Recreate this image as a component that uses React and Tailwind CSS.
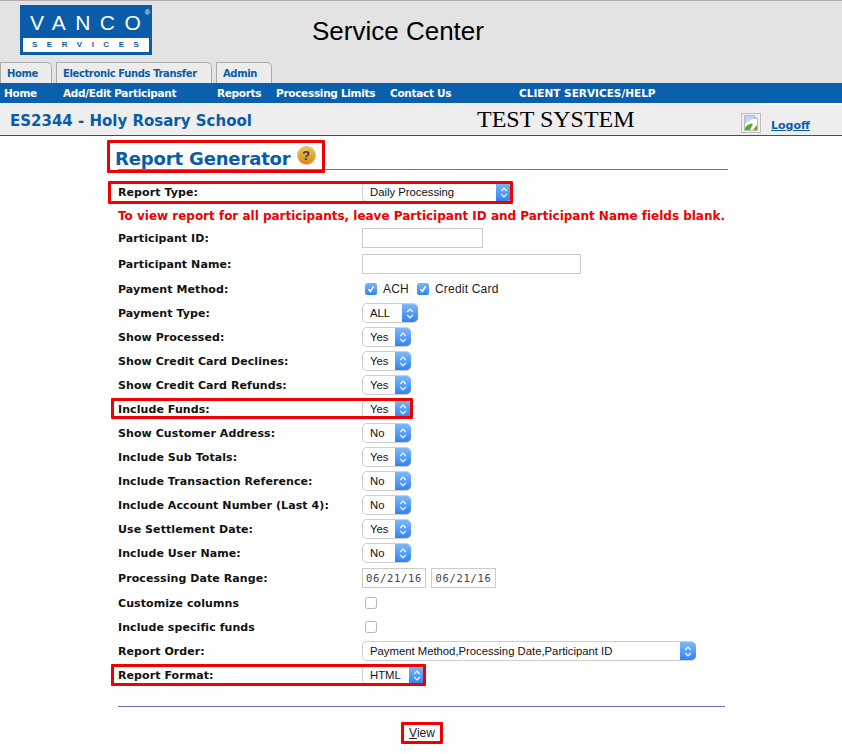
const sans = "font-['DejaVu_Sans',Verdana,sans-serif]";

function Sel({ w, text, seg = 16 }) {
  return (
    <div style={{ width: w }} className="h-5 flex bg-white border border-[#cfcfcf] border-r-0 rounded-[5px] font-['Liberation_Sans',Arial,sans-serif] text-[11.3px] text-[#111] leading-[18px] overflow-hidden">
      <div className="flex-1 pl-[7px] whitespace-nowrap">{text}</div>
      <div style={{ width: seg }} className="flex items-center justify-center bg-gradient-to-b from-[#7ab8fc] to-[#2f83f0]">
        <svg width="8" height="13" viewBox="0 0 8 13" fill="none" stroke="white" strokeWidth="1.2">
          <path d="M1.2 5 4 2.2 6.8 5" />
          <path d="M1.2 8 4 10.8 6.8 8" />
        </svg>
      </div>
    </div>
  );
}

function Check({ on }) {
  return on ? (
    <span className="w-3 h-3 rounded-[2.5px] bg-gradient-to-b from-[#7ab8fc] to-[#2f83f0] flex items-center justify-center">
      <svg width="10" height="10" viewBox="0 0 10 10" fill="none" stroke="white" strokeWidth="1.6">
        <path d="M2.4 5.2 4.3 7.4 7.6 2.4" />
      </svg>
    </span>
  ) : (
    <span className="w-3 h-3 rounded-[2.5px] bg-white border border-[#b5b5b5] block" />
  );
}

function Row({ h = 24, label, children }) {
  return (
    <div style={{ height: h }} className="relative flex items-center">
      <div className={`w-[244px] shrink-0 pt-[2px] font-bold text-[11px] text-[#111] tracking-[0.08px] ${sans}`}>{label}</div>
      {children}
    </div>
  );
}

function Box({ className }) {
  return <div className={`absolute z-10 border-[3px] border-[#f00000] rounded-[1px] pointer-events-none ${className}`} />;
}

function Tab({ w, children }) {
  return (
    <div style={{ width: w }} className={`h-[21px] bg-[#ececec] border-t border-r border-l border-[#ababab] rounded-tr-[5px] pl-[6px] pt-[1px] leading-[20px] font-bold text-[10px] text-[#0a5ca8] tracking-[-0.38px] whitespace-nowrap ${sans}`}>
      {children}
    </div>
  );
}

export default function App() {
  const yesNo = [
    ["Show Processed:", "Yes"],
    ["Show Credit Card Declines:", "Yes"],
    ["Show Credit Card Refunds:", "Yes"],
    ["Include Funds:", "Yes", true],
    ["Show Customer Address:", "No"],
    ["Include Sub Totals:", "Yes"],
    ["Include Transaction Reference:", "No"],
    ["Include Account Number (Last 4):", "No"],
    ["Use Settlement Date:", "Yes"],
    ["Include User Name:", "No"],
  ];
  return (
    <div className="w-[842px] h-[754px] bg-white overflow-hidden">
      <div className="h-[83px] bg-[#e3e3e3] border-t border-[#b0b0b0] flex flex-col">
        <div className="h-[61px] flex">
          <div className="ml-5 mt-[4px] w-[132px] h-[50px] bg-[#0a5ca8] relative">
            <div className="mt-[6px] pl-[10px] font-['Liberation_Sans',Arial,sans-serif] text-[21px] leading-[24px] tracking-[9.4px] text-white whitespace-nowrap">VANCO</div>
            <div className="absolute top-[3px] right-[2px] text-[7px] leading-[10px] text-white font-['Liberation_Sans',Arial,sans-serif]">®</div>
            <div className="absolute left-[3px] right-[3px] top-[33px] h-[14px] bg-white pl-[9px] font-['Liberation_Sans',Arial,sans-serif] font-bold text-[8px] leading-[14px] tracking-[9.5px] text-[#0a5ca8] whitespace-nowrap">SERVICES</div>
          </div>
          <div className="ml-[160px] mt-[13px] font-['Liberation_Sans',Arial,sans-serif] text-[26px] leading-[34px] text-black">Service Center</div>
        </div>
        <div className="flex gap-1">
          <Tab w={52}>Home</Tab>
          <Tab w={156}>Electronic Funds Transfer</Tab>
          <Tab w={56}>Admin</Tab>
        </div>
      </div>

      <div className={`h-5 pt-[2px] bg-[#0a60ad] flex items-center font-bold text-[10.5px] text-white tracking-[-0.3px] whitespace-nowrap ${sans}`}>
        <span className="ml-1 w-[59px]">Home</span>
        <span className="w-[154px]">Add/Edit Participant</span>
        <span className="w-[59px]">Reports</span>
        <span className="w-[114px]">Processing Limits</span>
        <span className="w-[129px]">Contact Us</span>
        <span className="tracking-[0px]">CLIENT SERVICES/HELP</span>
      </div>

      <div className="relative h-[33px] bg-[#eeeeee] border-b border-[#0a5ca8] flex">
        <div className="absolute top-0 right-0 w-[81px] h-[2px] bg-white" />
        <div className={`ml-[10px] w-[467px] mt-[7px] font-bold text-[15px] leading-[22px] text-[#0a5ca8] whitespace-nowrap ${sans}`}>ES2344 - Holy Rosary School</div>
        <div className="w-[264px] mt-[1px] font-['Liberation_Serif','Times_New_Roman',serif] text-[24px] leading-[30px] text-black whitespace-nowrap">TEST SYSTEM</div>
        <svg className="mt-[10px] shrink-0" width="20" height="20" viewBox="0 0 20 20">
          <rect x="0.5" y="0.5" width="19" height="19" fill="#f1f1f1" stroke="#bdbdbd" />
          <path d="M3.5 2.5h10l3 3v12h-13z" fill="#fff" stroke="#b9b9b9" />
          <path d="M13.5 2.5v3h3" fill="#e4e4e4" stroke="#b9b9b9" />
          <path d="M4 3h9v3c-3 0-6 2-9 5z" fill="#bcd6f2" />
          <path d="M4 17v-2c2-3 5-5 8-4l-3 6z" fill="#5fa62f" />
          <path d="M12 17l4-5v5z" fill="#5fa62f" />
        </svg>
        <a className={`ml-[10px] mt-[15px] font-bold text-[11px] leading-[16px] text-[#0a5ca8] underline ${sans}`} href="#">Logoff</a>
      </div>

      <div className="ml-[118px] w-[610px]">
        <div className="relative h-[34px] flex">
          <Box className="left-[-11px] top-[4px] w-[218px] h-[33px]" />
          <div className={`-ml-[3px] mt-[11px] font-bold text-[18px] leading-[24px] text-[#0a5ca8] tracking-[-0.15px] whitespace-nowrap ${sans}`}>Report Generator</div>
          <div className="ml-[6px] mt-[10px] w-[19px] h-[19px] rounded-full bg-gradient-to-b from-[#f9c23c] to-[#dd8a06] border border-[#b9b9b9] text-center font-['Liberation_Sans',Arial,sans-serif] font-bold text-[13px] leading-[17px] text-[#1c3f7a]">?</div>
          <div className="absolute left-0 right-0 bottom-0 h-px bg-[#6f6fc0]" />
        </div>

        <div className="mt-[10px]">
          <Row label="Report Type:">
            <Box className="left-[-10px] top-[1px] w-[405px] h-[23px]" />
            <Sel w={150} text="Daily Processing" />
          </Row>
          <div className={`h-[22px] pt-[2px] flex items-center font-bold text-[12px] text-[#f00000] tracking-[-0.01px] whitespace-nowrap ${sans}`}>
            To view report for all participants, leave Participant ID and Participant Name fields blank.
          </div>
          <Row label="Participant ID:">
            <div className="w-[121px] h-5 border border-[#cccccc] bg-white" />
          </Row>
          <Row h={28} label="Participant Name:">
            <div className="w-[219px] h-5 border border-[#cccccc] bg-white" />
          </Row>
          <Row h={22} label="Payment Method:">
            <div className="flex items-center font-['Liberation_Sans',Arial,sans-serif] text-[12px] text-[#222] tracking-[0.2px]">
              <span className="ml-[3px]"><Check on /></span>
              <span className="ml-[6px] w-[22px]">ACH</span>
              <span className="ml-[12px]"><Check on /></span>
              <span className="ml-[6px]">Credit Card</span>
            </div>
          </Row>
          <div className="mt-[1px]">
            <Row label="Payment Type:"><Sel w={56} text="ALL" /></Row>
          </div>
          {yesNo.map(([label, val, boxed]) => (
            <Row key={label} label={label}>
              {boxed && <Box className="left-[-7px] top-[1px] w-[302px] h-[21px]" />}
              <Sel w={49} text={val} />
            </Row>
          ))}
          <Row h={26} label="Processing Date Range:">
            <div className="flex gap-[5px] font-['DejaVu_Sans_Mono',monospace] text-[10.5px] text-[#444] tracking-[0.7px]">
              <div className="w-[64px] h-5 border border-[#cccccc] bg-white text-center leading-[18px]">06/21/16</div>
              <div className="w-[65px] h-5 border border-[#cccccc] bg-white text-center leading-[18px]">06/21/16</div>
            </div>
          </Row>
          <Row label="Customize columns"><span className="ml-[3px]"><Check /></span></Row>
          <Row label="Include specific funds"><span className="ml-[3px]"><Check /></span></Row>
          <Row label="Report Order:"><Sel w={334} text="Payment Method,Processing Date,Participant ID" /></Row>
          <Row label="Report Format:">
            <Box className="left-[-7px] top-[1px] w-[315px] h-[22px]" />
            <Sel w={63} text="HTML" />
          </Row>
        </div>

        <div className="mt-[19px] w-[607px] h-px bg-[#6f6fc0]" />
        <div className="mt-[15px] ml-[283px] w-[42px] h-[22px] border-[3px] border-[#f00000] rounded-[1px] bg-white flex items-center justify-center font-['Liberation_Sans',Arial,sans-serif] text-[12px] text-[#222]">
          <span><span className="underline">V</span>iew</span>
        </div>
      </div>
    </div>
  );
}
